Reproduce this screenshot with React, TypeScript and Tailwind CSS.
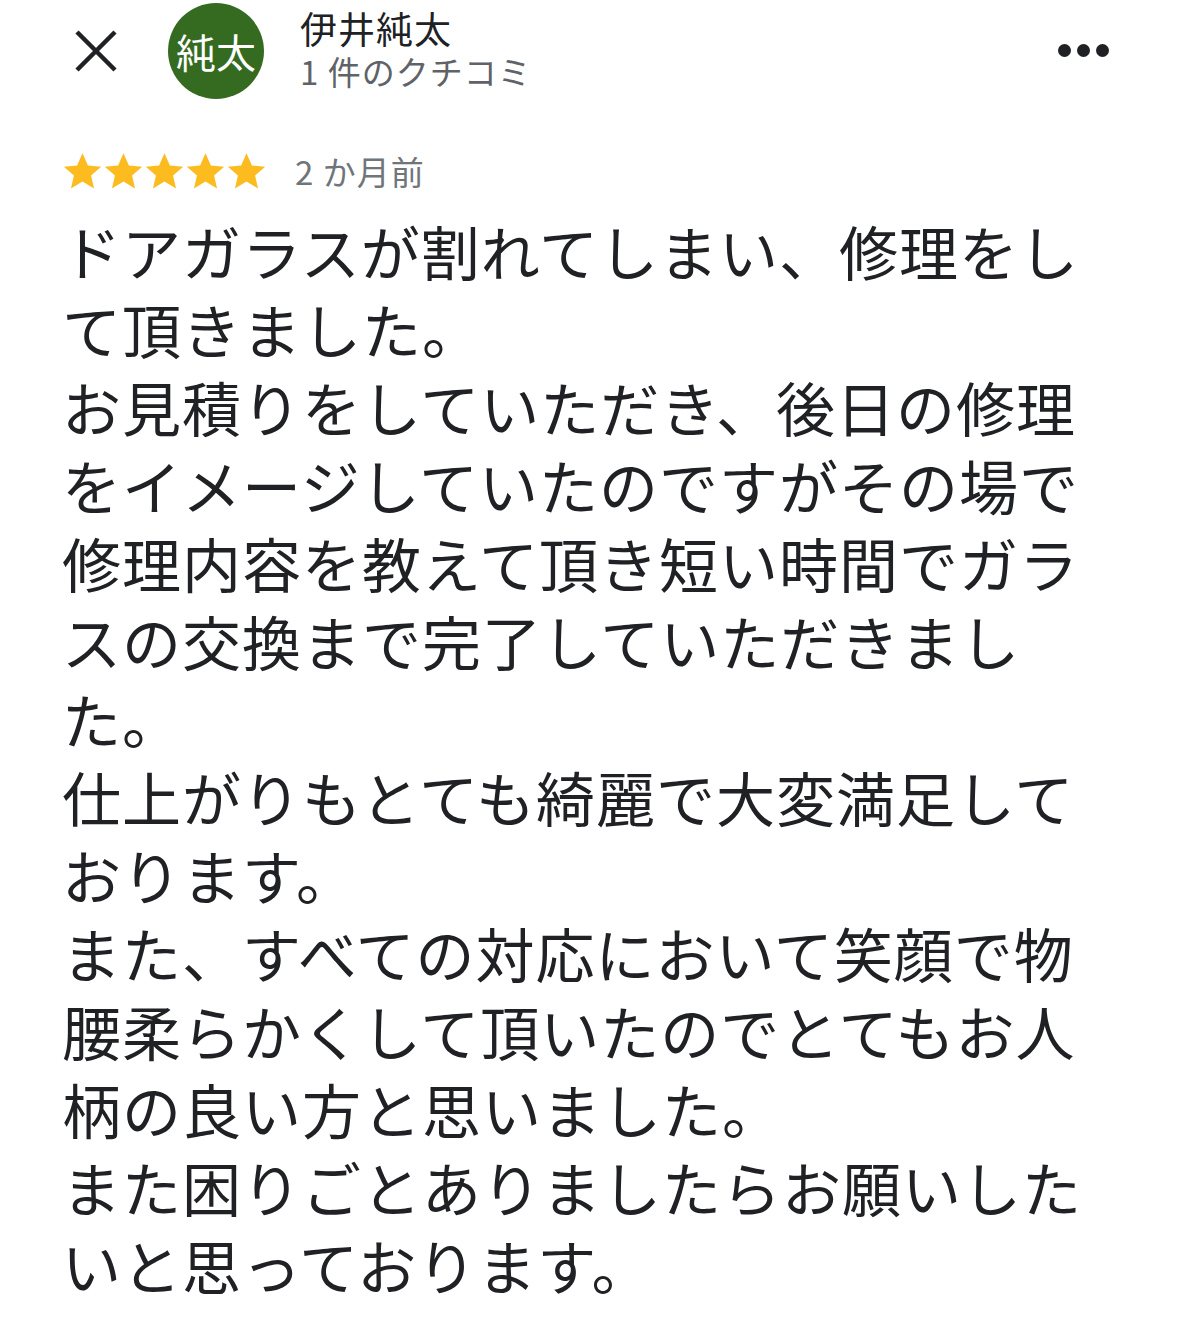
const lines = [
  'ドアガラスが割れてしまい、修理をし',
  'て頂きました。',
  'お見積りをしていただき、後日の修理',
  'をイメージしていたのですがその場で',
  '修理内容を教えて頂き短い時間でガラ',
  'スの交換まで完了していただきまし',
  'た。',
  '仕上がりもとても綺麗で大変満足して',
  'おります。',
  'また、すべての対応において笑顔で物',
  '腰柔らかくして頂いたのでとてもお人',
  '柄の良い方と思いました。',
  'また困りごとありましたらお願いした',
  'いと思っております。',
];

function Star() {
  return (
    <svg width="41" height="41" viewBox="1 1 22 22">
      <path
        d="M12 2.2l2.9 6.6 7.1.6-5.4 4.7 1.6 7-6.2-3.7-6.2 3.7 1.6-7L2 9.4l7.1-.6z"
        fill="#fcbb1e"
      />
    </svg>
  );
}

export default function App() {
  return (
    <div
      className="w-[1179px] h-[1332px] bg-white overflow-hidden text-[#202124]"
      style={{ fontFamily: '"Noto Sans CJK JP", "Noto Sans", sans-serif' }}
    >
      <div className="flex items-center h-[102px] pl-[72px] pr-[70px]">
        <svg width="48" height="48" viewBox="0 0 48 48">
          <path d="M5 5L43 43M43 5L5 43" stroke="#202124" strokeWidth="4.5" strokeLinecap="butt" />
        </svg>
        <div className="ml-[48px] w-[96px] h-[96px] rounded-full bg-[#356b21] flex items-center justify-center text-white text-[40px] leading-none">
          純太
        </div>
        <div className="ml-[36px] flex flex-col gap-[4px] -mt-[4px]">
          <div className="text-[37px] leading-[40px] tracking-[1px]">伊井純太</div>
          <div className="text-[33px] leading-[38px] tracking-[1px] text-[#5f6368]">1 件のクチコミ</div>
        </div>
        <div className="ml-auto flex gap-[6px] items-center -mt-[2px]">
          <span className="w-[13px] h-[13px] rounded-full bg-[#202124]" />
          <span className="w-[13px] h-[13px] rounded-full bg-[#202124]" />
          <span className="w-[13px] h-[13px] rounded-full bg-[#202124]" />
        </div>
      </div>

      <div className="pl-[62px] pr-[30px]">
        <div className="flex items-center mt-[48px] h-[42px]">
          <div className="flex">
            <Star />
            <Star />
            <Star />
            <Star />
            <Star />
          </div>
          <span className="ml-[28px] text-[33px] tracking-[1px] text-[#70757a] leading-none">2 か月前</span>
        </div>

        <div className="mt-[20px] text-[59px] leading-[78px] tracking-[1px] whitespace-nowrap">
          {lines.map((l, i) => (
            <div key={i}>{l}</div>
          ))}
        </div>
      </div>
    </div>
  );
}
